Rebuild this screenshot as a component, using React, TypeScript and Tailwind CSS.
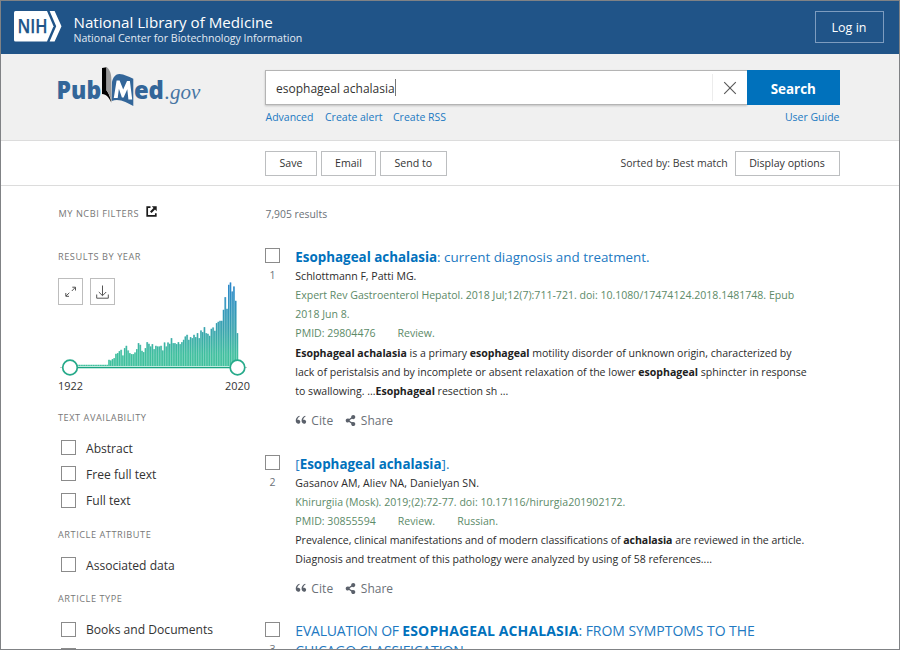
import React from 'react';
import { RiDoubleQuotesL } from 'react-icons/ri';
import { FaShareAlt } from 'react-icons/fa';

const earlyYears = Array.from({ length: 23 }, () => 5);
const laterYears = [
  20, 18, 22, 25, 38, 40, 46, 50, 33, 55, 62, 48, 40, 37, 37, 42, 52, 70, 65, 47, 43, 55, 73, 68, 60, 67, 52, 62, 60,
  60, 62, 48, 72, 60, 72, 68, 85, 70, 70, 67, 73, 67, 73, 80, 90, 95, 80, 88, 85, 95, 88, 100, 85, 108, 103, 118, 100,
  98, 92, 113, 117, 107, 130, 134, 137, 137, 170, 208, 173, 245, 252, 225, 240, 197, 100,
];
const years = [...earlyYears, ...laterYears].map((v) => v / 3);

function NihLogo() {
  return (
    <svg width="48" height="31" viewBox="0 0 48 31" className="shrink-0">
      <path d="M1.5 0H33L39.5 15.2L33 30.5H1.5Q0 30.5 0 29V1.5Q0 0 1.5 0Z" fill="#fff" />
      <path d="M35.6 0H40.6L47.5 15.2L40.6 30.5H35.6L42.2 15.2Z" fill="#fff" />
      <text x="3.6" y="22.4" textLength="30" lengthAdjust="spacingAndGlyphs" fontFamily="Open Sans, sans-serif" fontWeight="600" fontSize="19.8" fill="#205488" stroke="#205488" strokeWidth="0.25">
        NIH
      </text>
    </svg>
  );
}

function PubMedLogo() {
  return (
    <svg width="146" height="44" viewBox="57 64 146 44" className="block">
      <g fontFamily="Open Sans, sans-serif" fontWeight="800" fontSize="25.5" fill="#336699">
        <text x="56.6" y="98.5" textLength="44.5" lengthAdjust="spacingAndGlyphs">Pub</text>
        <text x="133.9" y="98.5" textLength="30" lengthAdjust="spacingAndGlyphs">ed</text>
      </g>
      <path d="M102 68L106.500 67.200V90.500C108 92 110.5 97 111.3 102.5C109 97.500 106.500 94.500 102 94Z" fill="#000" />
      <path d="M106.500 67C110 69.500 111.500 74 111.300 80L111.800 103C110.500 97 108.800 93 106.500 90.500Z" fill="#999" />
      <path d="M112 82C113 77 116 73.800 119.500 74C124.500 74.300 128 76.500 133.300 78.800V106C127 102.500 119 98 111.800 101Z" fill="#336699" />
      <path d="M113.800 98L116.600 80.500H119.600L123.200 89.500L127 81H129.900L132.200 99.500H128.400L127.300 89.300L123.600 97.500H121.900L118.900 88.800L117.700 98Z" fill="#fff" />
      <text x="164.800" y="98.700" textLength="35.500" lengthAdjust="spacingAndGlyphs" fontFamily="Liberation Serif, serif" fontStyle="italic" fontSize="22" fill="#4675a3">
        .gov
      </text>
    </svg>
  );
}

function ExternalIcon() {
  return (
    <svg width="11" height="11" viewBox="0 0 11 11" className="mb-[5px]">
      <path d="M4.500 1.200H1.200V9.800H9.800V7.200" fill="none" stroke="#1b1b1b" strokeWidth="1.700" />
      <path d="M5.800 0.300H10.700V5.200L9 3.500L5.500 7L4 5.500L7.500 2Z" fill="#1b1b1b" />
    </svg>
  );
}

function YearChart() {
  return (
    <svg width="200" height="98" viewBox="55 278 200 98" className="block">
      <defs>
        <linearGradient id="bars" gradientUnits="userSpaceOnUse" x1="0" x2="0" y1="282" y2="367">
          <stop offset="0" stopColor="#2a86cb" />
          <stop offset="0.550" stopColor="#38a1ae" />
          <stop offset="0.850" stopColor="#3fbf9d" />
          <stop offset="1" stopColor="#3fc09c" />
        </linearGradient>
        <linearGradient id="gaps" gradientUnits="userSpaceOnUse" x1="0" x2="0" y1="282" y2="367">
          <stop offset="0" stopColor="#8fc0e4" />
          <stop offset="1" stopColor="#8edcc6" />
        </linearGradient>
      </defs>
      {years.map((h, i) => (
        <g key={i}>
          <rect x={68.400 + i * 1.735} y={366.500 - h} width="1.735" height={h} fill="url(#gaps)" />
          <rect x={68.400 + i * 1.735} y={366.500 - h} width="1.300" height={h} fill="url(#bars)" />
        </g>
      ))}
      <path d="M60 367.500H247" stroke="#c9c9c9" />
      <path d="M70 367.500H237" stroke="#bfe9dd" strokeWidth="3" />
      <path d="M70 367.500H237" stroke="#1aa583" />
      <g fill="#fff" stroke="#26aa8a" strokeWidth="1.700">
        <circle cx="70" cy="367.500" r="7.300" />
        <circle cx="237.500" cy="367.500" r="7.300" />
      </g>
      <g fill="none" stroke="#bdbdbd">
        <rect x="58.500" y="278.500" width="24" height="26" fill="#fff" />
        <rect x="90.500" y="278.500" width="24" height="26" fill="#fff" />
      </g>
      <g fill="none" stroke="#555" strokeWidth="1">
        <path d="M71.800 291L75.300 287.400M72.300 287.200H75.500V290.500M69.300 292.800L66 296M65.800 293V296.300H69" />
        <path d="M102.500 285.500V295.500M98.800 292L102.500 295.700L106.200 292M96.700 294.500V298.200H108.300V294.500" />
      </g>
    </svg>
  );
}

function Heading({ children }: { children: React.ReactNode }) {
  return <h3 className="text-[9.2px] leading-[14px] tracking-[0.54px] text-[#777]">{children}</h3>;
}

function Box() {
  return <span className="block size-[15px] shrink-0 border border-[#8b8b8b] bg-white" />;
}

function Filter({ label }: { label?: string }) {
  return (
    <label className="flex h-[26.3px] items-center gap-[10px] pl-[3px] text-[12.1px] leading-[18px] text-[#333]">
      <Box />
      <span className="pt-[2px]">{label}</span>
    </label>
  );
}

function Result({ n, title, children }: { n: number; title: React.ReactNode; children?: React.ReactNode }) {
  return (
    <article className="flex">
      <div className="w-[30px] shrink-0 pt-[1px]">
        <Box />
        <div className="mt-[3px] w-[15px] text-center text-[10.5px] leading-[19px] text-[#6b7178]">{n}</div>
      </div>
      <div className="w-[545px] pl-[0.3px] text-[10.55px] leading-[19.15px] text-[#2b2b2b]">
        <h2 className="text-[13.4px] leading-[20px] text-[#2179c2]">{title}</h2>
        {children}
      </div>
    </article>
  );
}

function Actions() {
  return (
    <div className="mt-[9.5px] flex items-center text-[12px] leading-[19px] text-[#6b7178]">
      <RiDoubleQuotesL className="mr-[3px] -ml-px size-[14px] text-[#5b616b]" />
      <span className="w-[33.500px] tracking-[0.1px]">Cite</span>
      <FaShareAlt className="mr-[5px] size-[11px] text-[#5b616b]" />
      Share
    </div>
  );
}

function B({ children }: { children: React.ReactNode }) {
  return <b className="font-bold text-[#212121]">{children}</b>;
}

const button = 'flex h-[25px] items-center justify-center border border-[#bcbec0] bg-white pt-[2px] text-[10.6px] text-[#333]';

export default function App() {
  return (
    <div className="flex h-[650px] w-[900px] flex-col overflow-hidden border border-[#808285] bg-white font-['Open_Sans',sans-serif] whitespace-nowrap">
      <header className="flex h-[53px] shrink-0 bg-[#205488] pt-[10px] pr-[15.500px] pl-[13px] text-white">
        <NihLogo />
        <div className="ml-[11.5px] pt-[2px]">
          <div className="text-[15.17px] leading-[18px]">National Library of Medicine</div>
          <div className="text-[10.59px] leading-[14px] text-[#e3ebf3]">National Center for Biotechnology Information</div>
        </div>
        <button className="ml-auto flex h-[32px] w-[69px] items-center justify-center border border-[#7d9cbf] pt-[2px] text-[12.5px]">Log in</button>
      </header>

      <section className="flex h-[87px] shrink-0 border-b border-[#dcdcdc] bg-[#f0f0f0]">
        <div className="w-[264px] pt-[10px] pl-[56px]">
          <PubMedLogo />
        </div>
        <div className="w-[574.500px] pt-[16px] text-[#2179c2]">
          <div className="flex h-[35px]">
            <div className="flex flex-1 items-center border border-r-0 border-[#b4b4b4] bg-white pl-[10px] text-[12px] text-[#333] shadow-[0_1px_2px_rgba(0,0,0,0.2)]">
              <span className="pt-[2px]">esophageal achalasia</span>
              <span className="h-[17px] w-px bg-[#777]" />
              <span className="ml-auto flex h-[27px] w-[35px] items-center justify-center border-l border-[#ececec]">
                <svg width="14" height="14" viewBox="0 0 14 14" className="mr-px">
                  <path d="M1.200 1.200L12.800 12.800M12.800 1.200L1.200 12.800" stroke="#5a5a5a" strokeWidth="1.150" />
                </svg>
              </span>
            </div>
            <button className="z-10 w-[92.500px] bg-[#0071bc] pt-[3px] text-[13.4px] font-bold text-white">Search</button>
          </div>
          <nav className="flex gap-[11px] pt-[4px] pl-[0.5px] text-[10.5px] leading-[17px]">
            <span className="w-[48.5px]">Advanced</span>
            <span className="w-[57px]">Create alert</span>
            <span>Create RSS</span>
            <span className="ml-auto">User Guide</span>
          </nav>
        </div>
      </section>

      <section className="flex h-[45px] shrink-0 items-center gap-[4px] border-b border-[#dcdcdc] pl-[264px] text-[10.5px] text-[#3a3a3a]">
        <button className={`${button} w-[52px]`}>Save</button>
        <button className={`${button} w-[55px]`}>Email</button>
        <button className={`${button} w-[66.5px]`}>Send to</button>
        <span className="ml-[170px] w-[110px] pt-[2px]">Sorted by: Best match</span>
        <button className={`${button} w-[105px]`}>Display options</button>
      </section>

      <main className="flex min-h-0 flex-1">
        <aside className="w-[264px] shrink-0 pt-[20.5px] pl-[57px]">
          <div className="flex h-[14px] items-center gap-[7px] pl-[0.5px]">
            <Heading>MY NCBI FILTERS</Heading>
            <ExternalIcon />
          </div>
          <div className="mt-[29px]">
            <Heading>RESULTS BY YEAR</Heading>
          </div>
          <div className="mt-[14.5px] -ml-[3px]">
            <YearChart />
          </div>
          <div className="flex w-[192px] justify-between pt-[2px] text-[10.9px] leading-[15px] text-[#333]">
            <span>1922</span>
            <span>2020</span>
          </div>
          <div className="mt-[18px] mb-[9.500px]">
            <Heading>TEXT AVAILABILITY</Heading>
          </div>
          <Filter label="Abstract" />
          <Filter label="Free full text" />
          <Filter label="Full text" />
          <div className="mt-[14.5px] mb-[9.5px]">
            <Heading>ARTICLE ATTRIBUTE</Heading>
          </div>
          <Filter label="Associated data" />
          <div className="mt-[14.5px] mb-[10px]">
            <Heading>ARTICLE TYPE</Heading>
          </div>
          <Filter label="Books and Documents" />
          <Filter />
        </aside>

        <div className="pt-[19px]">
          <div className="pl-[0.5px] text-[10.35px] leading-[18px] text-[#6b7178]">7,905 results</div>
          <div className="mt-[24px]">
            <Result
              n={1}
              title={
                <>
                  <b className="text-[#0071bc]">Esophageal achalasia</b>: current diagnosis and treatment.
                </>
              }
            >
              <div>Schlottmann F, Patti MG.</div>
              <div className="text-[#5c8a68]">
                Expert Rev Gastroenterol Hepatol. 2018 Jul;12(7):711-721. doi: 10.1080/17474124.2018.1481748. Epub
                <br />
                2018 Jun 8.
                <div className="flex gap-[22px]">
                  <span>PMID: 29804476</span>
                  <span>Review.</span>
                </div>
              </div>
              <div className="tracking-[-0.01px]">
                <B>Esophageal achalasia</B> is a primary <B>esophageal</B> motility disorder of unknown origin, characterized by
                <br />
                lack of peristalsis and by incomplete or absent relaxation of the lower <B>esophageal</B> sphincter in response
                <br />
                to swallowing. ...<B>Esophageal</B> resection sh ...
              </div>
              <Actions />
            </Result>
          </div>
          <div className="mt-[24px]">
            <Result
              n={2}
              title={
                <>
                  [<b className="text-[#0071bc]">Esophageal achalasia</b>].
                </>
              }
            >
              <div className="tracking-[0.08px]">Gasanov AM, Aliev NA, Danielyan SN.</div>
              <div className="tracking-[0.02px] text-[#5c8a68]">
                Khirurgiia (Mosk). 2019;(2):72-77. doi: 10.17116/hirurgia201902172.
                <div className="flex gap-[22px]">
                  <span>PMID: 30855594</span>
                  <span>Review.</span>
                  <span>Russian.</span>
                </div>
              </div>
              <div>
                <span className="tracking-[-0.032px]">
                  Prevalence, clinical manifestations and of modern classifications of <B>achalasia</B> are reviewed in the article.
                </span>
                <br />
                Diagnosis and treatment of this pathology were analyzed by using of 58 references....
              </div>
              <Actions />
            </Result>
          </div>
          <div className="mt-[23.500px]">
            <Result
              n={3}
              title={
                <>
                  <span className="text-[14px] tracking-[-0.2px]">EVALUATION OF </span>
                  <b className="text-[14px] tracking-[0.13px] text-[#0071bc]">ESOPHAGEAL ACHALASIA</b>
                  <span className="text-[14px] tracking-[-0.05px]">: FROM SYMPTOMS TO THE</span>
                  <br />
                  <span className="text-[14px] tracking-[-0.15px]">CHICAGO CLASSIFICATION.</span>
                </>
              }
            />
          </div>
        </div>
      </main>
    </div>
  );
}
